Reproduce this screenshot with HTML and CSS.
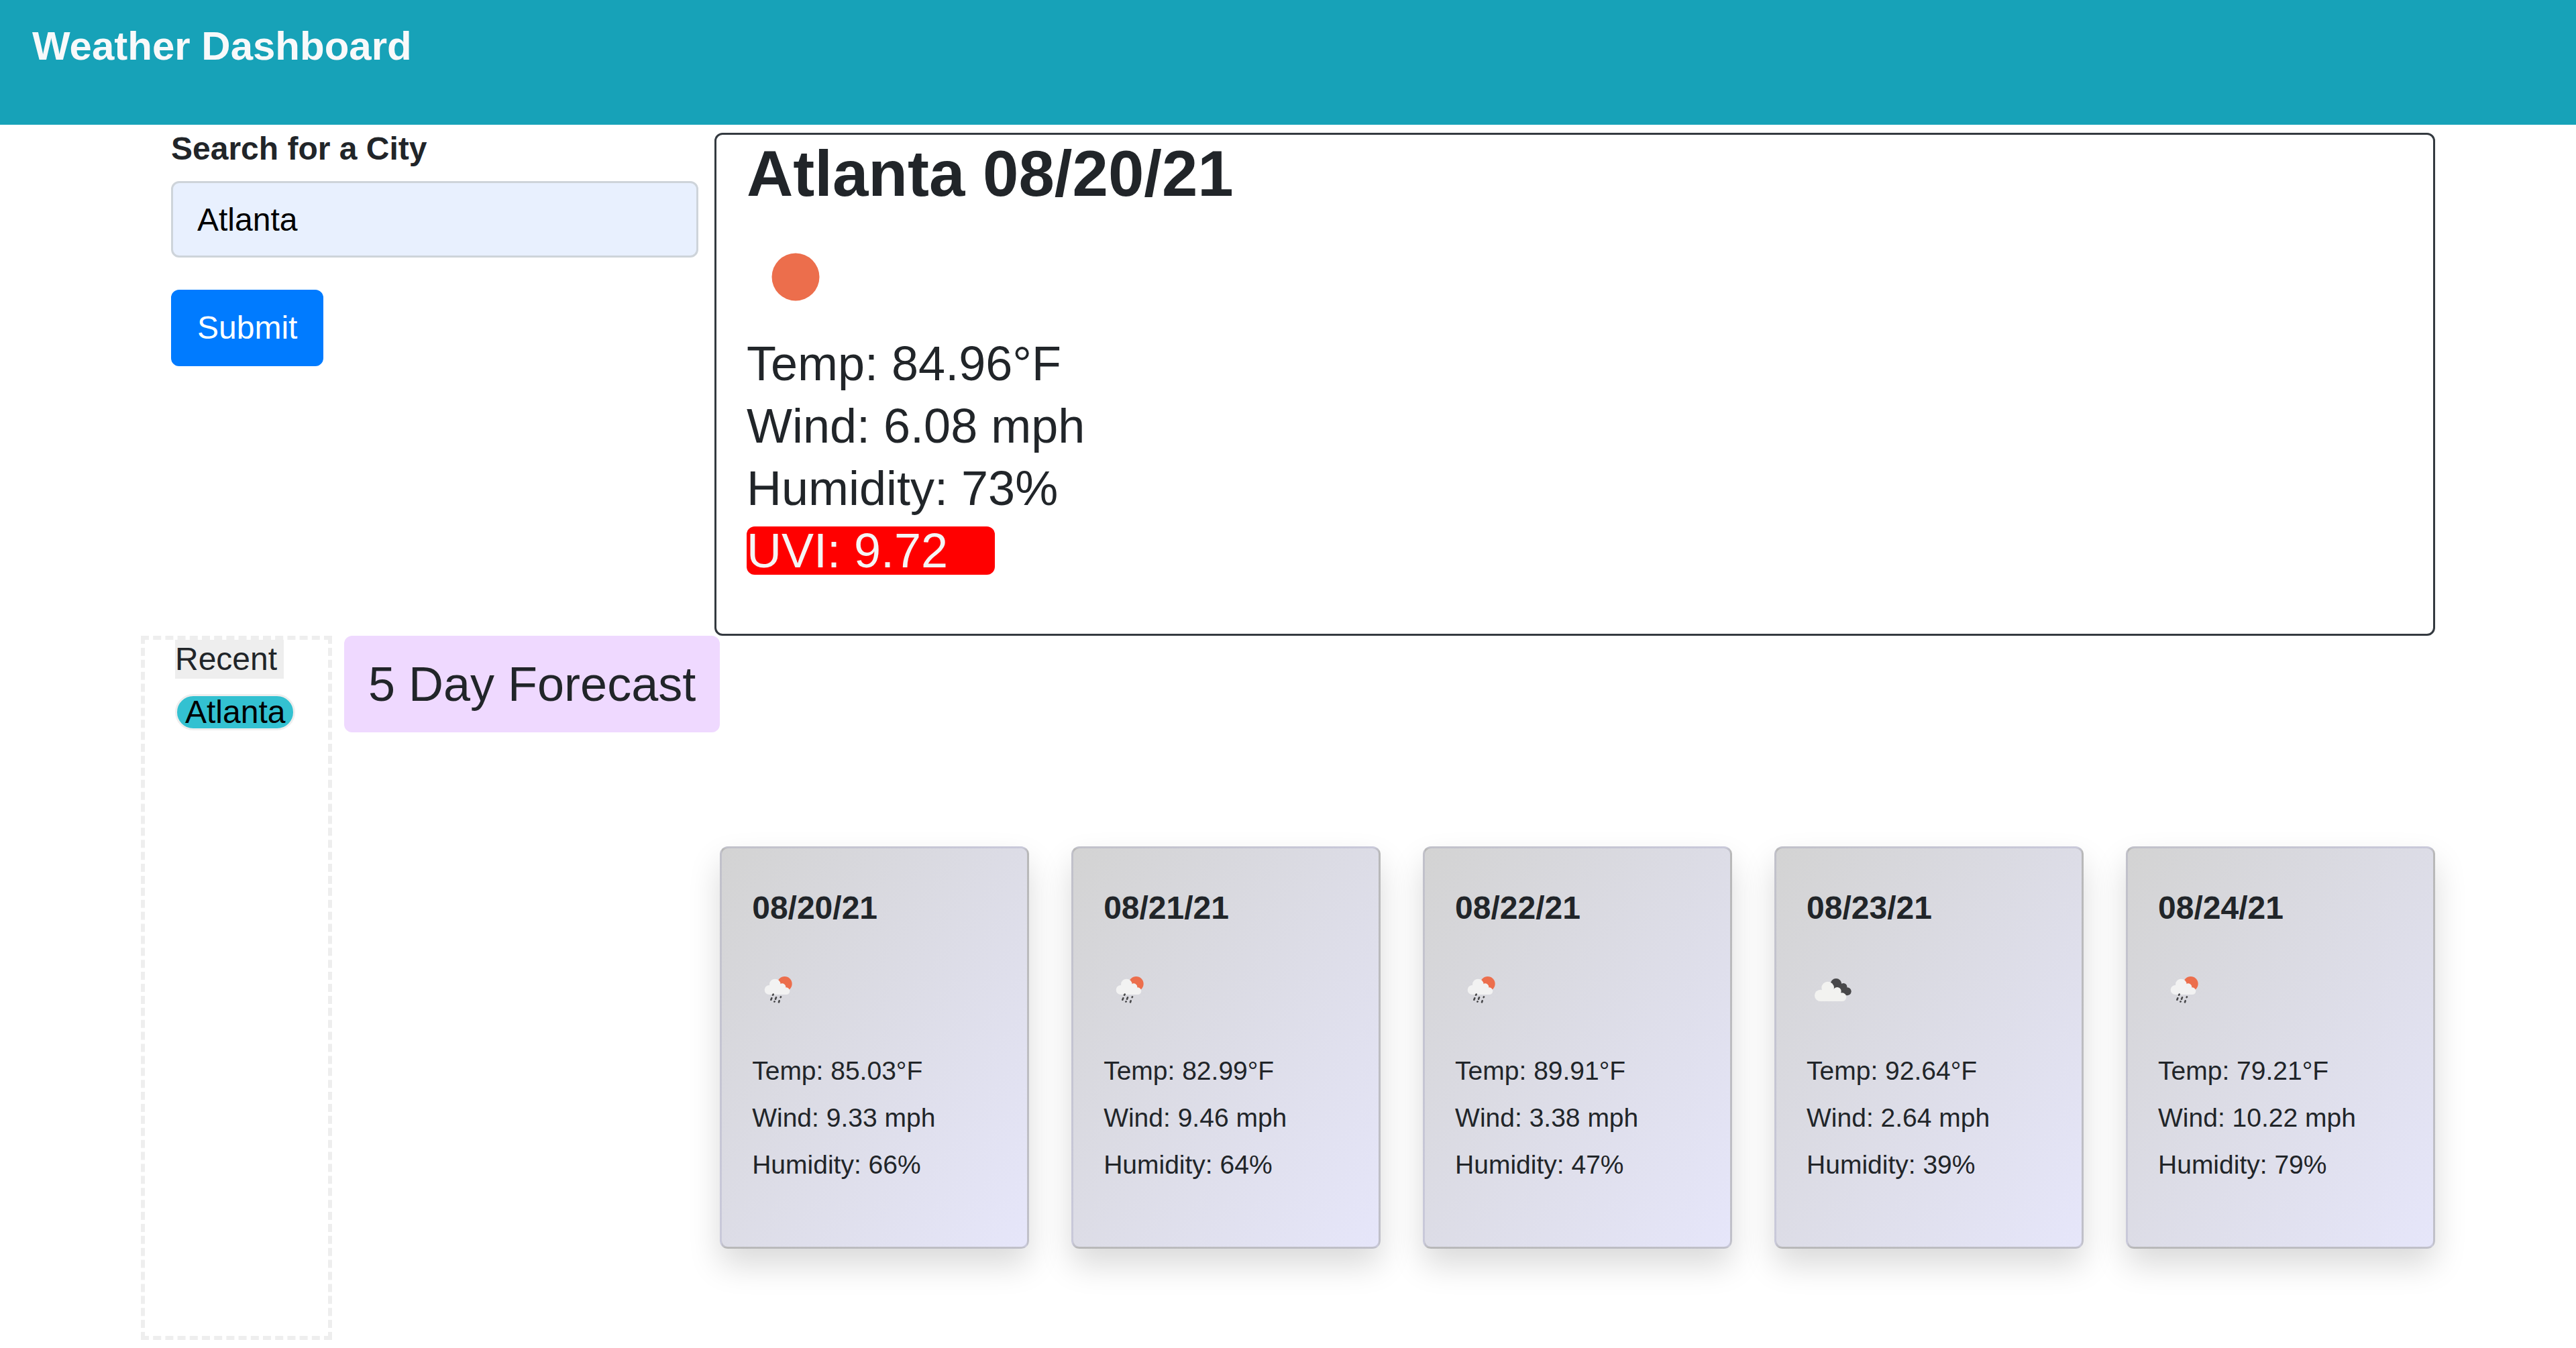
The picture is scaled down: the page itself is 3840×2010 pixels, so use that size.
FILE: index.html
```html
<!DOCTYPE html>
<html lang="en">
<head>
<meta charset="utf-8">
<title>Weather Dashboard</title>
<link rel="stylesheet" href="styles.css">
</head>
<body>
<svg class="symbols" aria-hidden="true">
  <symbol id="icon-rain" viewBox="3 18 234 234">
    <circle cx="149" cy="111" r="33" fill="#ec6e4c"/>
    <g fill="#f2f2f2">
      <circle cx="106" cy="114" r="25"/>
      <circle cx="80" cy="138" r="21"/>
      <circle cx="138" cy="125" r="16"/>
      <circle cx="156" cy="143" r="16"/>
      <path d="M80 120h50l26 12v27H80z"/>
    </g>
    <g stroke="#48484a" stroke-width="8" stroke-linecap="round">
      <path d="M98 158l-2 3M91 175l-3 7M111 172l-3 7M132 169l-1 2M104 190l-1 1M125 187l-2 6"/>
    </g>
  </symbol>
  <symbol id="icon-clouds" viewBox="9 18 234 234">
    <g fill="#48484a">
      <circle cx="141" cy="112" r="25"/>
      <circle cx="174" cy="124" r="16"/>
      <circle cx="191" cy="145" r="18"/>
      <path d="M140 120l34-6 17 49-25-4z"/>
    </g>
    <g fill="#f2f2f0">
      <circle cx="104" cy="129" r="28"/>
      <circle cx="71" cy="163" r="26"/>
      <circle cx="146" cy="144" r="18"/>
      <circle cx="168" cy="170" r="19"/>
      <path d="M71 140h80l17 15v34H71z"/>
    </g>
  </symbol>
</svg>

<header class="banner">
  <h1 class="banner-title">Weather Dashboard</h1>
</header>

<main class="container">
  <section class="top-row">
    <form class="search">
      <label class="search-label" for="city">Search for a City</label>
      <input class="search-input" id="city" type="text" value="Atlanta">
      <button class="search-button" type="button">Submit</button>
    </form>
    <section class="current">
      <h2 class="current-title">Atlanta 08/20/21</h2>
      <svg class="current-icon" viewBox="0 0 150 150" role="img" aria-label="Clear sky"><circle cx="73" cy="75" r="35.5" fill="#ec6e4c"/></svg>
      <ul class="current-list">
        <li>Temp: 84.96°F</li>
        <li>Wind: 6.08 mph</li>
        <li>Humidity: 73%</li>
        <li class="uvi">UVI: 9.72</li>
      </ul>
    </section>
  </section>

  <section class="bottom-row">
    <aside class="recent">
      <h3 class="recent-title">Recent</h3>
      <button class="recent-city" type="button">Atlanta</button>
    </aside>
    <section class="forecast">
      <h2 class="forecast-title">5 Day Forecast</h2>
      <div class="cards">
        <article class="card">
          <h3 class="card-date">08/20/21</h3>
          <svg class="card-icon" role="img" aria-label="Rain"><use href="#icon-rain"/></svg>
          <ul class="card-list"><li>Temp: 85.03°F</li><li>Wind: 9.33 mph</li><li>Humidity: 66%</li></ul>
        </article>
        <article class="card">
          <h3 class="card-date">08/21/21</h3>
          <svg class="card-icon" role="img" aria-label="Rain"><use href="#icon-rain"/></svg>
          <ul class="card-list"><li>Temp: 82.99°F</li><li>Wind: 9.46 mph</li><li>Humidity: 64%</li></ul>
        </article>
        <article class="card">
          <h3 class="card-date">08/22/21</h3>
          <svg class="card-icon" role="img" aria-label="Rain"><use href="#icon-rain"/></svg>
          <ul class="card-list"><li>Temp: 89.91°F</li><li>Wind: 3.38 mph</li><li>Humidity: 47%</li></ul>
        </article>
        <article class="card">
          <h3 class="card-date">08/23/21</h3>
          <svg class="card-icon" role="img" aria-label="Clouds"><use href="#icon-clouds"/></svg>
          <ul class="card-list"><li>Temp: 92.64°F</li><li>Wind: 2.64 mph</li><li>Humidity: 39%</li></ul>
        </article>
        <article class="card">
          <h3 class="card-date">08/24/21</h3>
          <svg class="card-icon" role="img" aria-label="Rain"><use href="#icon-rain"/></svg>
          <ul class="card-list"><li>Temp: 79.21°F</li><li>Wind: 10.22 mph</li><li>Humidity: 79%</li></ul>
        </article>
      </div>
    </section>
  </section>
</main>
</body>
</html>
```

FILE: styles.css
```css
*,
*::before,
*::after {
  box-sizing: border-box;
}

body {
  margin: 0;
  background: #fff;
  color: #212529;
  font-family: "Liberation Sans", Arial, sans-serif;
  font-size: 48px;
  line-height: 72px;
}

h1,
h2,
h3,
ul {
  margin: 0;
  padding: 0;
}

ul {
  list-style: none;
}

.symbols {
  display: none;
}

.banner {
  padding: 24px 48px 72px;
  background: #17a2b8;
}

.banner-title {
  color: #f8f9fa;
  font-size: 60px;
  line-height: 90px;
}

.container {
  max-width: 3420px;
  margin: 0 auto;
}

/* Search form and current weather */

.top-row {
  display: grid;
  grid-template-columns: 3fr 9fr;
  align-items: start;
}

.search {
  padding: 0 24px 0 45px;
}

.search-label {
  display: block;
  margin-bottom: 12px;
  font-weight: bold;
}

.search-input {
  display: block;
  width: 100%;
  height: 114px;
  margin-bottom: 48px;
  padding: 18px 36px;
  border: 3px solid #ced4da;
  border-radius: 12px;
  background: #e8f0fe;
  color: #000;
  font: inherit;
}

.search-button {
  padding: 18px 36px;
  border: 3px solid #007bff;
  border-radius: 12px;
  background: #007bff;
  color: #fff;
  font: inherit;
}

.current {
  margin-top: 12px;
  padding: 0 45px 88px;
  border: 3px solid #343a40;
  border-radius: 12px;
}

.current-title {
  margin-bottom: 21px;
  font-size: 96px;
  line-height: 116px;
}

.current-icon {
  display: block;
  width: 150px;
  height: 150px;
  margin-bottom: 18px;
}

.current-list {
  display: grid;
  gap: 21px;
  font-size: 72px;
  line-height: 72px;
}

.uvi {
  width: 370px;
  border-radius: 12px;
  background: #f00;
  color: #f5f5f5;
}

/* Recent searches and forecast */

.bottom-row {
  display: grid;
  grid-template-columns: 1fr 11fr;
}

.recent {
  display: flex;
  flex-direction: column;
  align-items: flex-start;
  gap: 23px;
  min-height: 1050px;
  padding: 0 45px;
  border: 6px dashed #eee;
}

.recent-title {
  padding-right: 10px;
  background: #eee;
  font-size: 48px;
  font-weight: normal;
  line-height: 58px;
}

.recent-city {
  padding: 0 12px;
  border: 3px solid #eee;
  border-radius: 27px;
  background: #33c1d1;
  color: #000;
  font: inherit;
  line-height: 48px;
}

.forecast {
  display: grid;
  grid-template-columns: auto 1fr;
  grid-template-rows: auto 1fr;
  row-gap: 170px;
  padding-left: 18px;
}

.forecast-title {
  padding: 18px 36px;
  border-radius: 12px;
  background: #efd9ff;
  font-size: 72px;
  font-weight: normal;
  line-height: 108px;
}

.cards {
  display: grid;
  grid-template-columns: repeat(5, 1fr);
  grid-column: 2;
  grid-row: 2;
  align-items: start;
  gap: 63px;
}

.card {
  padding: 60px 45px 87px;
  border: 3px solid rgba(0, 0, 0, 0.125);
  border-radius: 12px;
  background: linear-gradient(to bottom right, #d3d3d3, #e6e6fa);
  box-shadow: 0 24px 48px rgba(0, 0, 0, 0.15);
}

.card-date {
  margin-bottom: 53px;
  font-size: 48px;
  line-height: 58px;
}

.card-icon {
  display: block;
  width: 78px;
  height: 78px;
  margin-bottom: 48px;
}

.card-list {
  font-size: 39px;
  line-height: 70px;
}
```
